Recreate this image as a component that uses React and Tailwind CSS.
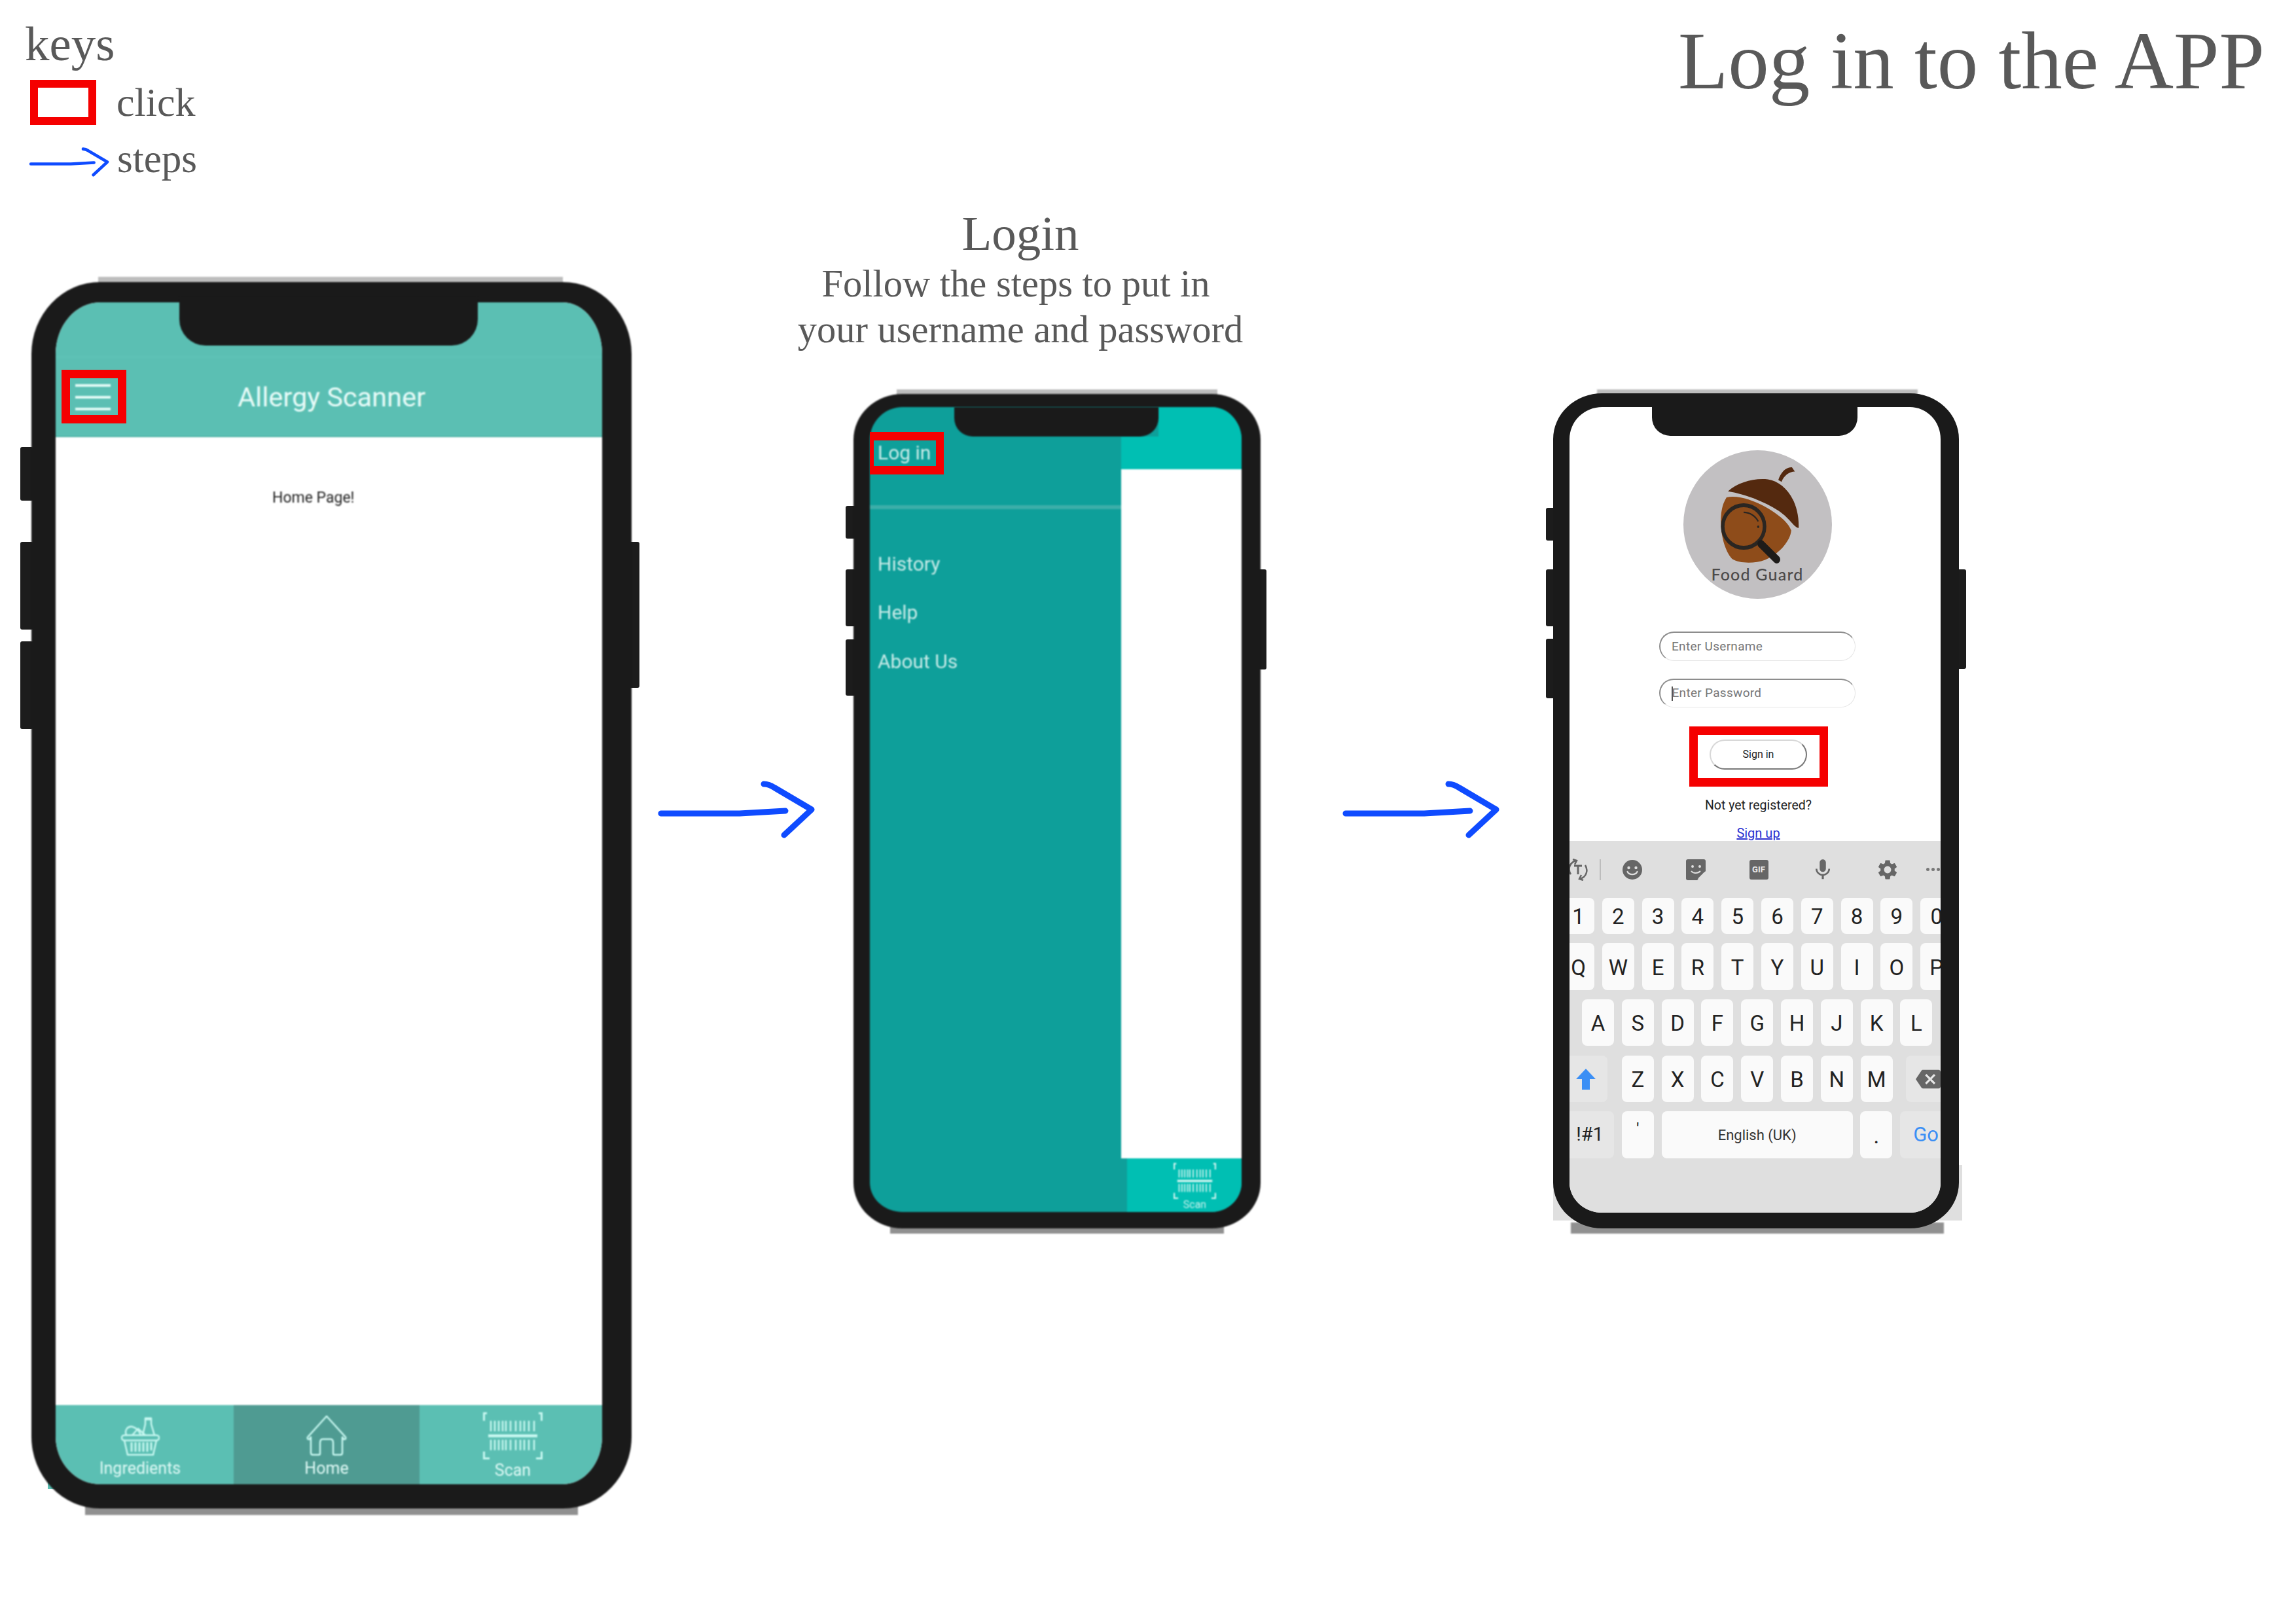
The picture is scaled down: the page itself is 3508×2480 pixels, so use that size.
import React from 'react';
import { MdMic, MdSettings, MdBackspace } from 'react-icons/md';

const serif = "font-['Liberation_Serif',serif] text-[#595959] leading-none whitespace-nowrap";
const roboto = "font-['Roboto',sans-serif] whitespace-nowrap";

function RedBox({ className }) {
  return <div className={"absolute border-[#f50000] border-solid " + className} />;
}

function Arrow({ className }) {
  return (
    <svg className={"absolute overflow-visible " + className} viewBox="0 0 240 90" fill="none" stroke="#0f4bff" strokeWidth="9" strokeLinecap="round" strokeLinejoin="round">
      <path d="M10 46 L130 46 L200 42" />
      <path d="M167 1 C172 1 178 3 184 7 L240 40 L198 79" />
    </svg>
  );
}

function BasketIcon() {
  return (
    <svg width="59" height="62" viewBox="0 0 59 62" fill="none" stroke="#c8f8f1" strokeWidth="2.5" strokeLinejoin="round" strokeLinecap="round">
      <rect x="1" y="30" width="57" height="8" rx="4" />
      <path d="M5 38 L10 60 H49 L54 38" />
      <path d="M16 42 V54 M22 42 V54 M28 42 V54 M34 42 V54 M40 42 V54 M46 42 V52" strokeWidth="3" />
      <path d="M33 30 L37 13 V4 H46 V13 L51 30" />
      <path d="M37 6 H46" />
      <path d="M8 30 C5 22 10 16 17 17 C24 19 28 24 30 30" />
      <path d="M17 30 L26 20 L37 30" />
    </svg>
  );
}

function HomeIcon() {
  return (
    <svg width="62" height="62" viewBox="0 0 62 62" fill="none" stroke="#c8f8f1" strokeWidth="2.5" strokeLinejoin="round" strokeLinecap="round">
      <path d="M31 1 L60 33 Q61 37 57 36 L55 33 V57 Q55 60 52 60 H43 Q41 60 41 58 V42 Q41 36 37 36 H25 Q21 36 21 42 V58 Q21 60 19 60 H10 Q7 60 7 57 V33 L5 36 Q1 37 2 33 Z" />
    </svg>
  );
}

function ScanIcon({ width = 91, height = 72, stroke = '#c8f8f1', className = '' }) {
  return (
    <svg width={width} height={height} viewBox="0 0 91 72" preserveAspectRatio="none" fill="none" stroke={stroke} className={className}>
      <path d="M6 1.5 H1.5 V13 M85 1.5 H89.5 V13 M1.5 60 V70.5 H10 M89.5 60 V70.5 H81" strokeWidth="3" />
      <path d="M8 36 H83" strokeWidth="4.5" />
      <path d="M12 13 V29 M18 13 V29 M24 13 V29 M30 13 V29 M35 13 V29 M42 13 V29 M50 13 V29 M57 13 V29 M63 13 V29 M70 13 V29 M78 13 V29" strokeWidth="2.5" />
      <path d="M12 42 V58 M18 42 V58 M24 42 V58 M30 42 V58 M35 42 V58 M42 42 V58 M50 42 V58 M57 42 V58 M63 42 V58 M70 42 V58 M78 42 V58" strokeWidth="2.5" />
    </svg>
  );
}

function Notch({ className }) {
  return <div className={"absolute bg-[#1a1a1a] rounded-b-[28px] " + className} />;
}

function Side({ className }) {
  return <div className={"absolute bg-[#1c1c1c] rounded-[3px] " + className} />;
}

function Logo() {
  return (
    <div className="relative w-[227px] h-[227px] rounded-full bg-[#c2c0c2] flex flex-col items-center justify-end pb-[29px]">
      <svg className="absolute inset-0" width="227" height="227" viewBox="503 213 540 495" preserveAspectRatio="none">
        <path d="M848 312 C856 290 874 268 898 270 L908 284 C888 284 868 298 860 318 Z" fill="#54290f" />
        <path d="M665 350 C700 320 760 305 810 310 C870 318 925 380 922 472 C905 470 890 440 850 415 C790 380 720 358 665 350 Z" fill="#54290f" />
        <path d="M660 370 C700 362 760 378 820 412 C860 436 885 456 895 480 C892 515 850 560 800 578 C760 592 705 590 680 575 C650 545 635 480 640 430 C643 400 650 385 660 370 Z" fill="#8e4c1a" />
        <ellipse cx="722" cy="467" rx="76" ry="71" fill="none" stroke="#2a2622" strokeWidth="13" />
        <path d="M785 525 L842 577" stroke="#1d1b19" strokeWidth="26" strokeLinecap="round" />
        <path d="M722 420 C745 420 765 432 775 450" stroke="#2a2622" strokeWidth="5" fill="none" />
        <circle cx="775" cy="468" r="4" fill="#2a2622" />
      </svg>
      <span className="relative font-['Lato',sans-serif] text-[25px] leading-[18px] font-medium text-[#4c4a4a] tracking-[1.2px] whitespace-nowrap">Food Guard</span>
    </div>
  );
}

const keyBase = "flex-none flex items-center justify-center rounded-[8px] font-['Roboto',sans-serif] h-full";
const key = keyBase + " w-[49px] bg-[#fafafa] text-[33px] text-[#222] pt-[3px]";

function Row({ className, children }) {
  return <div className={"flex flex-none " + className}>{children}</div>;
}

function Keyboard() {
  return (
    <div className="flex-1 bg-[#dfdfdf] flex flex-col overflow-hidden">
      <div className="relative h-[87px] flex-none flex items-center text-[#666]">
        <svg className="flex-none -ml-[4px]" width="34" height="34" viewBox="0 0 34 34" fill="none" stroke="#666" strokeWidth="2.5">
          <path d="M6 24 C1 16 4 6 14 3 M9 1 L15 3 L12 9" />
          <path d="M28 10 C33 18 30 28 20 31 M25 33 L19 31 L22 25" />
          <path d="M11 11 H23 M17 11 V24" strokeWidth="3" />
        </svg>
        <div className="flex-none w-[1.5px] h-[32px] bg-[#bdbdbd] ml-[16px]" />
        <svg className="flex-none ml-[33px]" width="30" height="30" viewBox="0 0 30 30">
          <circle cx="15" cy="15" r="15" fill="#666" />
          <circle cx="9.5" cy="12" r="2.2" fill="#dfdfdf" />
          <circle cx="20.5" cy="12" r="2.2" fill="#dfdfdf" />
          <path d="M7.5 18 C10 23.5 20 23.5 22.5 18" stroke="#dfdfdf" strokeWidth="2.2" fill="none" strokeLinecap="round" />
        </svg>
        <svg className="flex-none ml-[67px]" width="30" height="32" viewBox="0 0 30 32">
          <path d="M3 0 H27 Q30 0 30 3 V18 L17 32 H3 Q0 32 0 29 V3 Q0 0 3 0 Z" fill="#666" />
          <circle cx="10" cy="11" r="2" fill="#dfdfdf" />
          <circle cx="21" cy="11" r="2" fill="#dfdfdf" />
          <path d="M8 18 C11 22 18 22 22 18" stroke="#dfdfdf" strokeWidth="2" fill="none" />
          <path d="M19 30 L29 20" stroke="#dfdfdf" strokeWidth="2" />
        </svg>
        <div className="flex-none ml-[67px] w-[29px] h-[30px] rounded-[3px] bg-[#666] flex items-center justify-center">
          <span className="font-['Roboto',sans-serif] text-[13px] font-bold text-[#e8e8e8]">GIF</span>
        </div>
        <MdMic className="flex-none ml-[64px] text-[#666]" size={38} />
        <MdSettings className="flex-none ml-[62px] text-[#666]" size={36} />
        <div className="flex-none ml-[41px] flex gap-[3px]">
          <span className="w-[5px] h-[5px] rounded-full bg-[#777]" />
          <span className="w-[5px] h-[5px] rounded-full bg-[#777]" />
          <span className="w-[5px] h-[5px] rounded-full bg-[#777]" />
        </div>
      </div>
      <Row className="h-[55px] -ml-[11px] gap-[11.8px]">
        {['1', '2', '3', '4', '5', '6', '7', '8', '9', '0'].map((k) => <div key={k} className={key}>{k}</div>)}
      </Row>
      <Row className="h-[72px] mt-[14px] -ml-[11px] gap-[11.8px]">
        {['Q', 'W', 'E', 'R', 'T', 'Y', 'U', 'I', 'O', 'P'].map((k) => <div key={k} className={key}>{k}</div>)}
      </Row>
      <Row className="h-[71px] mt-[14px] ml-[19px] gap-[11.8px]">
        {['A', 'S', 'D', 'F', 'G', 'H', 'J', 'K', 'L'].map((k) => <div key={k} className={key}>{k}</div>)}
      </Row>
      <Row className="h-[71px] mt-[15px] -ml-[11px] gap-[11.8px]">
        <div className={keyBase + " w-[69px] bg-[#e6e6e6] mr-[10px]"}>
          <svg width="30" height="32" viewBox="0 0 30 32" className="ml-[2px]"><path d="M15 0 L30 16 H21 V32 H9 V16 H0 Z" fill="#3b8ff5" /></svg>
        </div>
        {['Z', 'X', 'C', 'V', 'B', 'N', 'M'].map((k) => <div key={k} className={key}>{k}</div>)}
        <div className={keyBase + " w-[80px] bg-[#e6e6e6] ml-[9px] justify-start pl-[15px]"}>
          <MdBackspace className="text-[#666]" size={38} />
        </div>
      </Row>
      <Row className="h-[72px] mt-[14px] -ml-[11px] gap-[11.8px]">
        <div className={keyBase + " w-[79px] bg-[#e6e6e6] text-[29px] text-[#222] pl-[5px]"}>!#1</div>
        <div className={keyBase + " w-[49px] bg-[#fafafa] items-start pt-[8px] text-[26px] text-[#222]"}>'</div>
        <div className={keyBase + " w-[292px] bg-[#fafafa] text-[22px] text-[#333]"}>English (UK)</div>
        <div className={keyBase + " w-[49px] bg-[#fafafa] items-end pb-[10px] text-[33px] text-[#222]"}>.</div>
        <div className={keyBase + " w-[80px] bg-[#e6e6e6] text-[31px] text-[#3b8ff5] justify-start pl-[20px]"}>Go</div>
      </Row>
    </div>
  );
}

export default function App() {
  return (
    <div className="relative w-[3508px] h-[2480px] bg-white overflow-hidden">
      {/* Legend */}
      <div className={"absolute left-[38px] top-[29px] text-[75px] " + serif}>keys</div>
      <RedBox className="left-[46px] top-[122px] w-[101px] h-[69px] border-x-[12px] border-y-[12px]" />
      <div className={"absolute left-[178px] top-[125px] text-[62px] " + serif}>click</div>
      <Arrow className="left-[42px] top-[227px] w-[122px] h-[46px]" />
      <div className={"absolute left-[179px] top-[212px] text-[61px] " + serif}>steps</div>

      <div className={"absolute left-[2564px] top-[31px] text-[125px] " + serif}>Log in to the APP</div>

      <div className="absolute left-[1159px] top-[319px] w-[800px] flex flex-col items-center">
        <div className={"text-[75px] " + serif}>Login</div>
        <div className={"mt-[11px] mr-[14px] text-[58.5px] " + serif}>Follow the steps to put in</div>
        <div className={"mt-[11px] text-[58.5px] " + serif}>your username and password</div>
      </div>

      <Arrow className="left-[1000px] top-[1197px] w-[240px] h-[90px]" />
      <Arrow className="left-[2046px] top-[1197px] w-[240px] h-[90px]" />

      {/* Phone 1 */}
      <div className="absolute left-[150px] top-[423px] w-[710px] h-[30px] bg-[#bdbdbd] blur-[1px]" />
      <div className="absolute left-[130px] top-[2290px] w-[753px] h-[25px] bg-[#909090] blur-[1px]" />
      <div className="absolute left-[73px] top-[2200px] w-[855px] h-[75px] bg-[#5bbfb3]" />
      <Side className="left-[31px] top-[683px] w-[20px] h-[82px]" />
      <Side className="left-[31px] top-[828px] w-[20px] h-[134px]" />
      <Side className="left-[31px] top-[980px] w-[20px] h-[134px]" />
      <Side className="left-[960px] top-[828px] w-[17px] h-[223px]" />
      <div className="absolute left-[48px] top-[431px] w-[917px] h-[1874px] border-solid border-[#1a1a1a] border-l-[37px] border-r-[45px] border-t-[31px] border-b-[37px] rounded-[105px/110px] overflow-hidden bg-white flex flex-col blur-[0.8px]">
        <div className="flex-none h-[206px] bg-[#5bbfb3] border-b-[2px] border-[#52b5a9] flex flex-col">
          <div className="h-[84px] border-b border-[#62c9bb] flex-none" />
          <div className="flex-1 flex items-center">
            <div className="ml-[30px] flex-none w-[54px] flex flex-col gap-[14px] mt-[2px]">
              <span className="h-[4px] bg-[#e3fbf7]" />
              <span className="h-[4px] bg-[#e3fbf7]" />
              <span className="h-[4px] bg-[#e3fbf7]" />
            </div>
            <div className={"ml-[194px] text-[41.5px] text-[#e6fbf8] mt-[2px] " + roboto}>Allergy Scanner</div>
          </div>
        </div>
        <div className="flex-1 relative">
          <div className={"ml-[331px] mt-[78px] text-[23px] leading-[30px] text-[#222] " + roboto}>Home Page!</div>
        </div>
        <div className="flex-none h-[121px] flex bg-[#5bbfb3] text-[#e0faf6]">
          <div className="w-[272px] flex flex-col items-center pt-[16px] pr-[14px]">
            <BasketIcon />
            <span className={"text-[25px] leading-[30px] mt-[4px] " + roboto}>Ingredients</span>
          </div>
          <div className="w-[284px] bg-[#4f9b92] flex flex-col items-center pt-[16px]">
            <HomeIcon />
            <span className={"text-[25px] leading-[30px] mt-[4px] " + roboto}>Home</span>
          </div>
          <div className="flex-1 flex flex-col items-center pt-[11px] pl-[6px]">
            <ScanIcon />
            <span className={"text-[25px] leading-[30px] mt-[2px] " + roboto}>Scan</span>
          </div>
        </div>
      </div>
      <Notch className="left-[274px] top-[455px] w-[456px] h-[73px] rounded-b-[40px] blur-[0.8px]" />
      <RedBox className="left-[94px] top-[565px] w-[99px] h-[82px] border-x-[13px] border-y-[13px]" />

      {/* Phone 2 */}
      <div className="absolute left-[1370px] top-[595px] w-[490px] h-[20px] bg-[#bdbdbd] blur-[1px]" />
      <div className="absolute left-[1360px] top-[1865px] w-[510px] h-[20px] bg-[#909090] blur-[1px]" />
      <Side className="left-[1292px] top-[773px] w-[16px] h-[50px]" />
      <Side className="left-[1292px] top-[870px] w-[16px] h-[87px]" />
      <Side className="left-[1292px] top-[977px] w-[16px] h-[86px]" />
      <Side className="left-[1922px] top-[870px] w-[13px] h-[153px]" />
      <div className="absolute left-[1304px] top-[602px] w-[622px] h-[1275px] border-solid border-[#1a1a1a] border-l-[25px] border-r-[29px] border-t-[20px] border-b-[25px] rounded-[75px/70px] overflow-hidden bg-[#0e9f9a] flex blur-[0.8px]">
        <div className="w-[384px] flex-none flex flex-col text-[#c9ece9]">
          <div className={"mt-[55px] ml-[12px] text-[30px] leading-[30px] blur-[0.7px] " + roboto}>Log in</div>
          <div className="mt-[65px] h-[6px] bg-[#3caea9]" />
          <div className={"mt-[69px] ml-[12px] text-[30px] leading-[30px] blur-[0.7px] " + roboto}>History</div>
          <div className={"mt-[44px] ml-[12px] text-[30px] leading-[30px] blur-[0.7px] " + roboto}>Help</div>
          <div className={"mt-[45px] ml-[12px] text-[30px] leading-[30px] blur-[0.7px] " + roboto}>About Us</div>
        </div>
        <div className="flex-1 flex flex-col">
          <div className="h-[95px] flex-none bg-[#00bfb3]">
            <div className="h-[45px] w-[57px] bg-[#0e9f9a]" />
          </div>
          <div className="flex-1 bg-white" />
          <div className="h-[82px] flex-none bg-[#00bfb3] ml-[9px] flex flex-col items-center pt-[7px] pl-[32px] text-[#c9f2ee]">
            <ScanIcon width={65} height={55} stroke="#d5f5f1" className="blur-[0.7px] flex-none" />
            <span className={"text-[16px] leading-[18px] " + roboto}>Scan</span>
          </div>
        </div>
      </div>
      <Notch className="left-[1458px] top-[622px] w-[312px] h-[45px] rounded-b-[22px] blur-[0.8px]" />
      <RedBox className="left-[1329px] top-[660px] w-[113px] h-[65px] border-l-[6px] border-r-[12px] border-t-[13px] border-b-[13px]" />

      {/* Phone 3 */}
      <div className="absolute left-[2440px] top-[595px] w-[490px] h-[20px] bg-[#bdbdbd] blur-[1px]" />
      <div className="absolute left-[2400px] top-[1868px] w-[570px] h-[17px] bg-[#909090] blur-[1px]" />
      <div className="absolute left-[2373px] top-[1780px] w-[625px] h-[85px] bg-[#dfdfdf]" />
      <Side className="left-[2362px] top-[776px] w-[15px] h-[50px]" />
      <Side className="left-[2362px] top-[870px] w-[15px] h-[87px]" />
      <Side className="left-[2362px] top-[976px] w-[15px] h-[91px]" />
      <Side className="left-[2989px] top-[870px] w-[15px] h-[152px]" />
      <div className="absolute left-[2373px] top-[601px] w-[620px] h-[1276px] border-solid border-[#1a1a1a] border-l-[25px] border-r-[28px] border-t-[21px] border-b-[24px] rounded-[75px/70px] overflow-hidden bg-white flex flex-col">
        <div className="flex-none h-[663px] flex flex-col items-center pl-[7px]">
          <div className="mt-[66px] flex-none"><Logo /></div>
          <div className="mt-[50px] w-[300px] h-[46px] rounded-full border-t-[2.5px] border-l-[2.5px] border-r-[1.5px] border-b-[1.5px] border-t-[#8d8d8d] border-l-[#8d8d8d] border-r-[#e5e5e5] border-b-[#e5e5e5] flex items-center pl-[17px]">
            <span className={"text-[19px] text-[#777] tracking-[0.3px] " + roboto}>Enter Username</span>
          </div>
          <div className="mt-[27px] w-[300px] h-[46px] rounded-full border-t-[2.5px] border-l-[2.5px] border-r-[1.5px] border-b-[1.5px] border-t-[#8d8d8d] border-l-[#8d8d8d] border-r-[#e5e5e5] border-b-[#e5e5e5] flex items-center pl-[17px]">
            <span className="w-[1.5px] h-[22px] bg-[#555] -mr-[1px]" />
            <span className={"text-[19px] text-[#777] tracking-[0.3px] " + roboto}>Enter Password</span>
          </div>
          <div className="mt-[49px] w-[149px] h-[47px] rounded-full border-2 border-t-[#d8d8d8] border-l-[#d8d8d8] border-r-[#777] border-b-[#777] flex items-center justify-center ml-[3px]">
            <span className={"text-[16px] text-[#222] " + roboto}>Sign in</span>
          </div>
          <div className={"mt-[43px] text-[19.5px] leading-[24px] text-[#222] ml-[3px] " + roboto}>Not yet registered?</div>
          <div className={"mt-[18px] text-[20px] leading-[24px] text-[#2a2fd0] underline ml-[3px] " + roboto}>Sign up</div>
        </div>
        <Keyboard />
      </div>
      <Notch className="left-[2524px] top-[622px] w-[314px] h-[44px] rounded-b-[22px]" />
      <RedBox className="left-[2581px] top-[1110px] w-[212px] h-[92px] border-x-[13px] border-y-[13px]" />
    </div>
  );
}
